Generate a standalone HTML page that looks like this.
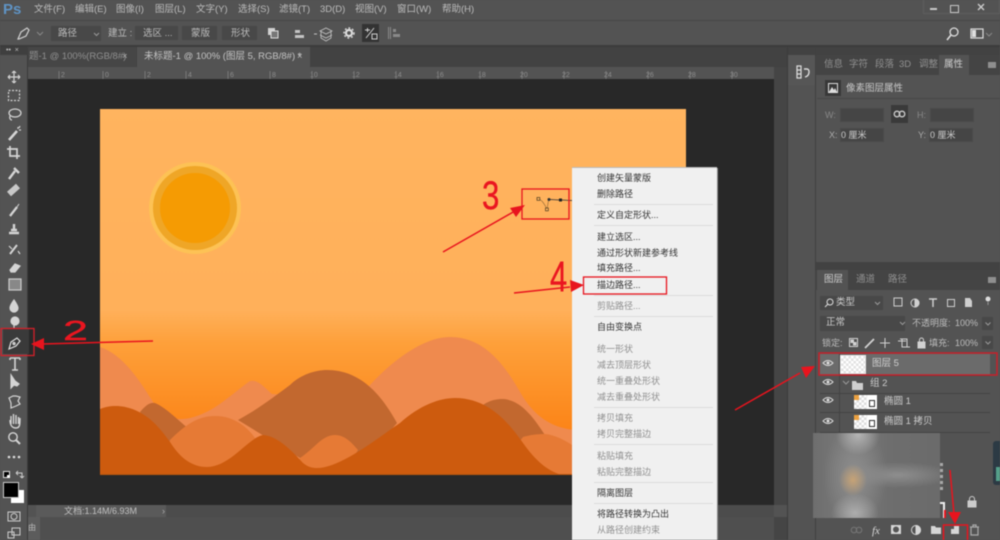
<!DOCTYPE html>
<html><head><meta charset="utf-8">
<style>
html,body{margin:0;padding:0;background:#535353}
#r{position:relative;width:1000px;height:540px;overflow:hidden;background:#535353;font-family:"Liberation Sans","Noto Sans CJK SC",sans-serif;font-size:9.5px;color:#bcbcbc;filter:blur(.55px)}
.a{position:absolute}
.t{position:absolute;white-space:nowrap;line-height:12px}
.m{position:absolute;left:597px;white-space:nowrap;font-size:9px;line-height:12px;color:#333}
.d{color:#8f8f8f}
.s{position:absolute;left:594px;width:119px;height:1px;background:#dcdcdc}
.b{position:absolute;background:#454545;border:1px solid #4a4a4a;box-sizing:border-box}
.n{position:absolute;white-space:nowrap;color:#ea1620;transform-origin:0 0;-webkit-text-stroke:.4px #ea1620}
svg{position:absolute;overflow:visible}
</style></head><body><div id="r">

<!-- top bars -->
<div class="a" style="left:0;top:20px;width:1000px;height:1px;background:#474747"></div>
<div class="a" style="left:0;top:45px;width:1000px;height:2px;background:#3c3c3c"></div>
<div class="t" style="left:3px;top:2px;font-size:15px;line-height:16px;font-weight:bold;color:#5f93c4">Ps</div>
<div class="t" style="left:34px;top:4px">文件(F)</div>
<div class="t" style="left:75px;top:4px">编辑(E)</div>
<div class="t" style="left:116px;top:4px">图像(I)</div>
<div class="t" style="left:155px;top:4px">图层(L)</div>
<div class="t" style="left:196px;top:4px">文字(Y)</div>
<div class="t" style="left:238px;top:4px">选择(S)</div>
<div class="t" style="left:279px;top:4px">滤镜(T)</div>
<div class="t" style="left:320px;top:4px">3D(D)</div>
<div class="t" style="left:355px;top:4px">视图(V)</div>
<div class="t" style="left:397px;top:4px">窗口(W)</div>
<div class="t" style="left:442px;top:4px">帮助(H)</div>
<!-- window buttons -->
<div class="a" style="left:923px;top:0;width:77px;height:14px;border:1px solid #5e5e5e;border-top:0;box-sizing:border-box"></div>
<div class="a" style="left:930px;top:8px;width:7px;height:2px;background:#c8c8c8"></div>
<div class="a" style="left:950px;top:5px;width:7px;height:6px;border:1px solid #c8c8c8"></div>
<svg style="left:977px;top:3px" width="9" height="9"><path d="M1 1L7 7M7 1L1 7" stroke="#ccc" stroke-width="1.4"/></svg>

<!-- options bar -->
<svg style="left:16px;top:26px" width="40" height="16"><path d="M2 13L5 6L11 2L13 4L10 10L3 13Z" fill="none" stroke="#d0d0d0" stroke-width="1.2"/><path d="M21 6L24 9L27 6" fill="none" stroke="#888" stroke-width="1"/></svg>
<div class="a" style="left:51px;top:26px;width:50px;height:15px;background:#484848"></div>
<div class="t" style="left:58px;top:28px">路径</div>
<svg style="left:93px;top:32px" width="8" height="5"><path d="M1 1L3.500 3.500L6 1" fill="none" stroke="#999"/></svg>
<div class="t" style="left:108px;top:28px">建立 :</div>
<div class="a" style="left:135px;top:26px;width:43px;height:14px;background:#484848"></div><div class="t" style="left:143px;top:28px">选区 ...</div>
<div class="a" style="left:182px;top:26px;width:35px;height:14px;background:#484848"></div><div class="t" style="left:191px;top:28px">蒙版</div>
<div class="a" style="left:222px;top:26px;width:35px;height:14px;background:#484848"></div><div class="t" style="left:231px;top:28px">形状</div>
<svg style="left:266px;top:26px" width="130" height="16" fill="none" stroke="#c4c4c4">
<rect x="2" y="2" width="7" height="7" fill="#d0d0d0" stroke="none"/><rect x="5" y="5" width="7" height="7" fill="#777" stroke="#dcdcdc"/>
<path d="M27 3V13M29 4H34V7H29ZM29 9H38V12H29Z" fill="#c4c4c4" stroke="none"/>
<path d="M48 8H51" /><path d="M54 5L60 2L66 5L60 8ZM54 9L60 12L66 9M55 5V12L60 15L65 12V5" stroke-width=".8"/>
</svg>
<svg style="left:343px;top:26px" width="14" height="14"><circle cx="6" cy="7" r="3" fill="none" stroke="#ddd" stroke-width="2.200"/><circle cx="6" cy="7" r="5" fill="none" stroke="#ddd" stroke-width="1.400" stroke-dasharray="1.800 2"/></svg>
<div class="a" style="left:362px;top:24px;width:17px;height:18px;background:#333"></div>
<svg style="left:364px;top:27px" width="14" height="13" fill="none" stroke="#d0d0d0"><path d="M1 3H6M3.500 1V5M2 11L10 1"/><rect x="8" y="7" width="5" height="5"/></svg>
<svg style="left:387px;top:26px" width="14" height="14" fill="#8a8a8a"><rect x="1" y="1" width="1" height="12"/><rect x="3" y="1" width="1" height="12"/><rect x="6" y="3" width="3" height="3"/><rect x="6" y="8" width="7" height="3"/></svg>
<!-- right of options -->
<svg style="left:945px;top:26px" width="50" height="16" fill="none" stroke="#ddd"><circle cx="9" cy="6" r="4" stroke-width="1.300"/><path d="M6 9L2 14" stroke-width="1.600"/><rect x="26" y="3" width="12" height="9" stroke-width="1.200"/><rect x="27" y="4" width="4" height="7" fill="#ddd" stroke="none"/><path d="M41 7L44 10L47 7" stroke="#888"/></svg>

<!-- tab row -->
<div class="a" style="left:28px;top:47px;width:759px;height:20px;background:#424242"></div>
<div class="a" style="left:28px;top:47px;width:108px;height:20px;background:#464646"></div>
<div class="t" style="left:29px;top:51px;color:#8f8f8f">题-1 @ 100%(RGB/8#)</div>
<div class="t" style="left:122px;top:51px;color:#aaa">×</div>
<div class="a" style="left:137px;top:47px;width:173px;height:20px;background:#535353"></div>
<div class="t" style="left:144px;top:51px;color:#c4c4c4">未标题-1 @ 100% (图层 5, RGB/8#) *</div>
<div class="t" style="left:297px;top:51px;color:#bbb">×</div>

<!-- ruler -->
<div class="a" style="left:28px;top:67px;width:746px;height:12px;background:#535353"></div>
<svg style="left:28px;top:67px;font-size:7px;font-family:'Liberation Sans',sans-serif" width="746" height="12" fill="#8e8e8e">
<text x="33" y="10">2</text><text x="77" y="10">0</text><text x="119" y="10">2</text><text x="160" y="10">4</text><text x="202" y="10">6</text><text x="244" y="10">8</text><text x="282" y="10">10</text><text x="324" y="10">12</text><text x="366" y="10">14</text><text x="408" y="10">16</text><text x="450" y="10">18</text><text x="492" y="10">20</text><text x="534" y="10">22</text><text x="576" y="10">24</text><text x="618" y="10">26</text><text x="660" y="10">28</text><text x="702" y="10">30</text>
<path d="M31 4V12M75 4V12M117 4V12M158 4V12M200 4V12M242 4V12M284 4V12M326 4V12M368 4V12M410 4V12M452 4V12M494 4V12M536 4V12M578 4V12M620 4V12M662 4V12M704 4V12" stroke="#777"/>
</svg>
<div class="a" style="left:28px;top:79px;width:746px;height:1px;background:#1e1e1e"></div>

<!-- canvas background -->
<div class="a" style="left:28px;top:79px;width:746px;height:426px;background:#282828"></div>
<!-- artboard -->
<svg style="left:0;top:0" width="1000" height="540">
<defs><linearGradient id="g" x1="0" y1="109" x2="0" y2="475" gradientUnits="userSpaceOnUse">
<stop offset="0" stop-color="#ffb45f"/><stop offset=".55" stop-color="#ffb05a"/><stop offset=".64" stop-color="#fea03a"/><stop offset=".88" stop-color="#fc8417"/><stop offset="1" stop-color="#fc8417"/></linearGradient>
<clipPath id="c"><rect x="100" y="109" width="586" height="366"/></clipPath></defs>
<rect x="100" y="109" width="586" height="366" fill="url(#g)"/>
<circle cx="195" cy="208" r="46" fill="#fdc255"/>
<circle cx="195" cy="208" r="42" fill="#efa627"/>
<circle cx="195" cy="208" r="35" fill="#f59b03"/>
<g clip-path="url(#c)">
<path d="M100 347C125 355 142 385 155 405C165 418 175 421 190 418C215 412 230 395 250 381C258 379 265 388 272 394C300 395 345 410 370 385C395 358 425 337 450 337C490 337 510 375 523 397C538 420 555 428 575 430L690 430V480H100Z" fill="#ef8a4e"/>
<path d="M140 412C146 405 150 402 155 403C165 407 178 420 190 430L165 450ZM238 420C260 408 275 396 290 385C300 375 315 370 327 370C365 370 385 402 397 423L372 452L300 458ZM483 405C490 400 497 399 503 399C522 400 535 420 545 435L525 445Z" fill="#c2682f"/>
<path d="M170 440C185 425 198 416 215 416C235 416 248 428 255 438L265 480L160 480ZM300 458C315 448 322 435 335 435C345 435 352 443 358 450L340 480L290 480ZM523 437C530 435 537 434 545 434C555 435 565 440 575 447V480H490Z" fill="#e67a35"/>
<path d="M100 409C108 406 112 406 118 406C145 408 160 428 170 442C180 458 192 467 207 467C230 467 248 438 263 435C278 436 293 452 303 463C308 467 312 468 317 468C340 468 375 440 400 423C420 405 440 398 455 398C490 398 510 425 523 443C535 460 548 472 563 475H100Z" fill="#cd5b0e"/>
</g>
<rect x="100" y="474" width="586" height="1" fill="#b8560f"/>
<!-- anchors -->
<path d="M538 199C543 200 545 206 547 209C548 205 548 201 549 199.500L572 200.500" fill="none" stroke="#8a6230" stroke-width=".6"/>
<path d="M549 199.500L572 200.500" fill="none" stroke="#333" stroke-width=".7"/>
<rect x="537" y="197.500" width="2.800" height="2.800" fill="#ffb45f" stroke="#4a3a20" stroke-width=".7"/>
<rect x="545.500" y="208" width="2.800" height="2.800" fill="#ffb45f" stroke="#4a3a20" stroke-width=".7"/>
<circle cx="549" cy="199.500" r="1.500" fill="#333"/><rect x="559" y="198.500" width="3" height="3" fill="#222"/>
</svg>

<!-- status bar -->
<div class="a" style="left:28px;top:505px;width:8px;height:12px;background:#535353"></div>
<div class="a" style="left:36px;top:505px;width:130px;height:12px;background:#5a5a5a"></div>
<div class="a" style="left:166px;top:505px;width:608px;height:12px;background:#4c4c4c"></div>
<div class="t" style="left:64px;top:505px;color:#c0c0c0;font-size:9px">文档:1.14M/6.93M</div>
<div class="t" style="left:162px;top:505px;color:#aaa;font-size:9px">&#8250;</div>
<div class="a" style="left:28px;top:517px;width:12px;height:23px;background:#5c5c5c"></div>
<div class="a" style="left:40px;top:517px;width:747px;height:23px;background:#4f4f4f"></div>
<div class="t" style="left:28px;top:522px;color:#bbb;font-size:8px">由</div>

<!-- toolbar -->
<div class="a" style="left:0;top:47px;width:28px;height:493px;background:#535353;border-right:1px solid #3a3a3a;box-sizing:border-box"></div>
<div class="a" style="left:0;top:47px;width:28px;height:8px;background:#3f3f3f"></div>
<div class="t" style="left:6px;top:46px;font-size:7px;line-height:9px;color:#bbb">&#8226;&#8226;&nbsp;&nbsp;×</div>
<svg style="left:0;top:0" width="28" height="540" fill="none" stroke="#d4d4d4" stroke-width="1.200">
<path d="M14 71V83M8 77H20M14 71L12 73M14 71L16 73M14 83L12 81M14 83L16 81M8 77L10 75M8 77L10 79M20 77L18 75M20 77L18 79"/>
<rect x="8.500" y="90.500" width="11" height="10" stroke-dasharray="2 1.500"/>
<ellipse cx="15" cy="113" rx="6" ry="4"/><path d="M10 116C9 119 11 120 12 120"/>
<path d="M9 140L17 131" stroke-width="2.600"/><path d="M18 127V129M21 130H19M20 126L19 128"/>
<path d="M10 146V156H20M7 149H17V159" stroke-width="1.700"/>
<path d="M9 179L15 171M14 168L19 173" stroke-width="2.400"/>
<path d="M9 194L18 186" stroke-width="6" stroke="#c8c8c8"/>
<path d="M10 216L17 207" stroke-width="2.300"/><path d="M17 207L19 204" stroke-width="1"/>
<path d="M11 230H17M14 224V230M9 233H19" stroke-width="2.400"/>
<path d="M10 254L17 245" stroke-width="2"/><path d="M9 246L12 249M18 251L20 254"/>
<path d="M10 270L15 264L20 266L15 272H11Z" fill="#d4d4d4"/>
<rect x="9" y="279" width="12" height="11" fill="#888" stroke="#ccc"/>
<path d="M14 300C11 304 10 306 10 308A4 4 0 0 0 18 308C18 306 16 303 14 300Z" fill="#d4d4d4"/>
<circle cx="15" cy="321" r="4" fill="#d4d4d4"/><path d="M14 325V329"/>
<path d="M10 358H20M15 358V370M12 370H18M10 358V360M20 358V360" stroke-width="1.600"/>
<path d="M11 375V388L14 385L17 386L19 384L15 381Z" fill="#d4d4d4"/>
<path d="M9 398L13 396L16 396L20 397L18 401L20 404L16 406L11 408L11 403Z"/>
<path d="M11 424V416M13.500 424V414M16 424V415M18.500 424V417M10 420C10 426 13 428 16 428C20 428 20 424 20 418" stroke-width="1.400"/>
<circle cx="13" cy="437" r="4.200" stroke-width="1.400"/><path d="M16 440L20 444" stroke-width="2"/>
</svg>
<svg style="left:0;top:0" width="28" height="540" fill="#ddd"><circle cx="9" cy="457" r="1.300"/><circle cx="14" cy="457" r="1.300"/><circle cx="19" cy="457" r="1.300"/></svg>
<div class="a" style="left:3px;top:329px;width:26px;height:25px;background:#3a3a3a"></div>
<svg style="left:7px;top:336px" width="14" height="14" fill="none" stroke="#e2e2e2" stroke-width="1.200"><path d="M2 13L4 6L10 2L13 5L9 10Z"/><circle cx="7" cy="7.500" r="1"/></svg>
<!-- swatches -->
<div class="a" style="left:3px;top:471px;width:5px;height:5px;background:#000;border:1px solid #ddd"></div>
<div class="a" style="left:7px;top:475px;width:3px;height:3px;background:#fff"></div>
<svg style="left:15px;top:470px" width="10" height="9" fill="none" stroke="#ccc"><path d="M1 3H7V8M1 3L3 1M1 3L3 5M7 8L5 6M7 8L9 6"/></svg>
<div class="a" style="left:11px;top:490px;width:13px;height:13px;background:#fff"></div>
<div class="a" style="left:3px;top:482px;width:14px;height:14px;background:#000;border:1px solid #ccc"></div>
<svg style="left:7px;top:511px" width="14" height="28" fill="none" stroke="#ccc"><rect x="1" y="1" width="12" height="9"/><circle cx="7" cy="5.500" r="3"/><rect x="5" y="17" width="8" height="7"/><rect x="1" y="21" width="6" height="6"/></svg>

<!-- dock -->
<div class="a" style="left:774px;top:67px;width:13px;height:473px;background:#454545"></div>
<div class="a" style="left:774px;top:505px;width:13px;height:12px;background:#535353"></div>
<div class="a" style="left:787px;top:47px;width:1px;height:493px;background:#3c3c3c"></div>
<div class="a" style="left:788px;top:55px;width:27px;height:30px;background:#565656"></div>
<div class="a" style="left:788px;top:47px;width:27px;height:8px;background:#424242"></div>
<div class="a" style="left:815px;top:47px;width:185px;height:8px;background:#424242"></div>
<svg style="left:796px;top:65px" width="16" height="15" fill="none" stroke="#ddd"><path d="M1 1H5V13H1ZM1 5H5M1 9H5" stroke-width="1.200"/><path d="M8 4H11C14 4 14 11 9 12" stroke-width="1.400"/></svg>

<!-- properties panel -->
<div class="a" style="left:815px;top:55px;width:185px;height:20px;background:#444"></div>
<div class="a" style="left:939px;top:55px;width:30px;height:20px;background:#535353"></div>
<div class="t" style="left:824px;top:59px;color:#909090">信息</div>
<div class="t" style="left:849px;top:59px;color:#909090">字符</div>
<div class="t" style="left:875px;top:59px;color:#909090">段落</div>
<div class="t" style="left:899px;top:59px;color:#909090">3D</div>
<div class="t" style="left:919px;top:59px;color:#909090">调整</div>
<div class="t" style="left:944px;top:59px;color:#cfcfcf">属性</div>
<div class="a" style="left:988px;top:62px;width:8px;height:6px;background:#8f8f8f"></div>
<div class="a" style="left:825px;top:80px;width:16px;height:16px;background:#383838"></div>
<svg style="left:828px;top:83px" width="10" height="10"><rect x=".5" y=".5" width="9" height="9" fill="none" stroke="#ddd"/><path d="M1 9L4 4L6 7L7 5L9 9Z" fill="#ddd"/></svg>
<div class="t" style="left:846px;top:83px;color:#c8c8c8">像素图层属性</div>
<div class="a" style="left:817px;top:98px;width:183px;height:1px;background:#474747"></div>
<div class="t" style="left:825px;top:109px;color:#888;font-size:9px">W:</div>
<div class="b" style="left:840px;top:108px;width:44px;height:14px"></div>
<div class="a" style="left:891px;top:105px;width:17px;height:18px;background:#3a3a3a"></div>
<svg style="left:893px;top:110px" width="13" height="8" fill="none" stroke="#ccc" stroke-width="1.300"><circle cx="4" cy="4" r="2.800"/><circle cx="9" cy="4" r="2.800"/></svg>
<div class="t" style="left:917px;top:109px;color:#888;font-size:9px">H:</div>
<div class="b" style="left:930px;top:108px;width:44px;height:14px"></div>
<div class="t" style="left:829px;top:129px;color:#aaa;font-size:9px">X:</div>
<div class="b" style="left:840px;top:128px;width:44px;height:14px"></div>
<div class="t" style="left:841px;top:129px;color:#ccc;font-size:9px">0 厘米</div>
<div class="t" style="left:918px;top:129px;color:#aaa;font-size:9px">Y:</div>
<div class="b" style="left:929px;top:128px;width:44px;height:14px"></div>
<div class="t" style="left:930px;top:129px;color:#ccc;font-size:9px">0 厘米</div>
<div class="a" style="left:815px;top:262px;width:185px;height:8px;background:#424242"></div>
<div class="a" style="left:815px;top:47px;width:1px;height:493px;background:#404040"></div>

<!-- layers panel -->
<div class="a" style="left:815px;top:270px;width:185px;height:20px;background:#444"></div>
<div class="a" style="left:817px;top:270px;width:31px;height:20px;background:#535353"></div>
<div class="t" style="left:824px;top:274px;color:#cfcfcf">图层</div>
<div class="t" style="left:856px;top:274px;color:#909090">通道</div>
<div class="t" style="left:888px;top:274px;color:#909090">路径</div>
<div class="a" style="left:988px;top:277px;width:8px;height:6px;background:#8f8f8f"></div>
<div class="a" style="left:820px;top:296px;width:63px;height:14px;background:#484848"></div>
<svg style="left:824px;top:298px" width="10" height="10" fill="none" stroke="#ddd"><circle cx="6" cy="4" r="3"/><path d="M4 6L1 9"/></svg>
<div class="t" style="left:836px;top:297px;color:#ccc">类型</div>
<svg style="left:874px;top:301px" width="8" height="5"><path d="M1 1L3.500 3.500L6 1" fill="none" stroke="#999"/></svg>
<svg style="left:893px;top:296px" width="100" height="14" fill="none" stroke="#cfcfcf"><rect x="1" y="2" width="8" height="8"/><circle cx="22" cy="7" r="4"/><path d="M22 3A4 4 0 0 1 22 11Z" fill="#cfcfcf"/><path d="M36 3H44M40 3V11" stroke-width="1.500"/><rect x="54.500" y="3.500" width="7" height="7"/><path d="M72 2H77L79 5V11H72Z" fill="#cfcfcf" stroke="none"/><circle cx="95" cy="3" r="2.500" fill="#ddd" stroke="none"/><path d="M95 6V9" stroke="#999"/></svg>
<div class="a" style="left:820px;top:316px;width:85px;height:15px;background:#484848"></div>
<div class="t" style="left:826px;top:317px;color:#ccc">正常</div>
<svg style="left:899px;top:321px" width="8" height="5"><path d="M1 1L3.500 3.500L6 1" fill="none" stroke="#999"/></svg>
<div class="t" style="left:912px;top:317px;font-size:9px">不透明度:</div>
<div class="t" style="left:955px;top:317px;font-size:9px">100%</div>
<div class="a" style="left:982px;top:317px;width:11px;height:13px;background:#484848"></div>
<svg style="left:985px;top:322px" width="7" height="4"><path d="M.5 .5L3 3L5.500 .5" fill="none" stroke="#999"/></svg>
<div class="t" style="left:822px;top:337px;font-size:9px">锁定:</div>
<svg style="left:848px;top:336px" width="96" height="14" fill="none" stroke="#d2d2d2"><rect x="1.500" y="2.500" width="8" height="8"/><rect x="3" y="4" width="2.500" height="2.500" fill="#d2d2d2"/><rect x="5.500" y="6.500" width="2.500" height="2.500" fill="#d2d2d2"/><path d="M17 12L26 3" stroke-width="1.800"/><path d="M37 2V12M32 7H42"/><path d="M52 3H59V11M50 5H58M54 3V11H62"/><rect x="70" y="6" width="7" height="6" fill="#d2d2d2"/><path d="M71.500 6V4A2 2 0 0 1 75.500 4V6"/></svg>
<div class="t" style="left:929px;top:337px;font-size:9px">填充:</div>
<div class="t" style="left:955px;top:337px;font-size:9px">100%</div>
<div class="a" style="left:982px;top:336px;width:11px;height:13px;background:#484848"></div>
<svg style="left:985px;top:341px" width="7" height="4"><path d="M.5 .5L3 3L5.500 .5" fill="none" stroke="#999"/></svg>
<!-- layers -->
<div class="a" style="left:820px;top:354px;width:170px;height:21px;background:#6b6b6b"></div>
<div class="a" style="left:840px;top:375px;width:150px;height:1px;background:#3e3e3e"></div>
<div class="a" style="left:820px;top:393px;width:170px;height:1px;background:#434343"></div>
<div class="a" style="left:820px;top:412px;width:170px;height:1px;background:#434343"></div>
<div class="a" style="left:820px;top:432px;width:170px;height:1px;background:#434343"></div>
<div class="a" style="left:839px;top:354px;width:1px;height:120px;background:#434343"></div>
<svg style="left:822px;top:355px" width="12" height="80">
<g fill="none" stroke="#ddd" stroke-width="1"><path d="M1 8Q6 3 11 8Q6 13 1 8Z"/><path d="M1 27Q6 22 11 27Q6 32 1 27Z"/><path d="M1 45Q6 40 11 45Q6 50 1 45Z"/><path d="M1 66Q6 61 11 66Q6 71 1 66Z"/></g>
<g fill="#ddd"><circle cx="6" cy="8" r="1.500"/><circle cx="6" cy="27" r="1.500"/><circle cx="6" cy="45" r="1.500"/><circle cx="6" cy="66" r="1.500"/></g></svg>
<div class="a" style="left:841px;top:356px;width:24px;height:17px;background:repeating-conic-gradient(#e2e2e2 0 25%,#fff 0 50%) 0 0/5px 5px;outline:1px solid #e8e8e8"></div>
<div class="t" style="left:872px;top:358px;color:#d0d0d0">图层 5</div>
<svg style="left:841px;top:378px" width="22" height="14"><path d="M2 3L5 6L8 3" fill="none" stroke="#999"/><path d="M11 3H15L16 5H22V12H11Z" fill="#cfcfcf"/></svg>
<div class="t" style="left:870px;top:378px;color:#ccc">组 2</div>
<div class="a" style="left:854px;top:395px;width:13px;height:14px;background:repeating-conic-gradient(#ddd 0 25%,#fff 0 50%) 0 0/5px 5px"></div>
<div class="a" style="left:854px;top:395px;width:5px;height:5px;background:#eaa040"></div>
<div class="a" style="left:867px;top:395px;width:10px;height:14px;background:#fff"></div>
<div class="a" style="left:869px;top:400px;width:6px;height:7px;border:1px solid #333;box-sizing:border-box"></div>
<div class="t" style="left:884px;top:396px;color:#ccc">椭圆 1</div>
<div class="a" style="left:854px;top:415px;width:13px;height:14px;background:repeating-conic-gradient(#ddd 0 25%,#fff 0 50%) 0 0/5px 5px"></div>
<div class="a" style="left:854px;top:415px;width:5px;height:5px;background:#eaa040"></div>
<div class="a" style="left:867px;top:415px;width:10px;height:14px;background:#fff"></div>
<div class="a" style="left:869px;top:420px;width:6px;height:7px;border:1px solid #333;box-sizing:border-box"></div>
<div class="t" style="left:884px;top:416px;color:#ccc">椭圆 1 拷贝</div>
<!-- right side of hidden layers -->
<svg style="left:966px;top:495px" width="12" height="14" fill="none" stroke="#ccc"><rect x="2" y="6" width="8" height="6" fill="#ccc"/><path d="M3.500 6V4A2.500 2.500 0 0 1 8.500 4V6"/></svg>
<div class="a" style="left:940px;top:463px;width:3px;height:27px;background:repeating-linear-gradient(#a8a8a8 0 3px,#5a5a5a 3px 6px)"></div>
<div class="a" style="left:940px;top:502px;width:5px;height:2px;background:#eee"></div>
<div class="a" style="left:943px;top:502px;width:2px;height:16px;background:#eee"></div>
<div class="a" style="left:993px;top:441px;width:7px;height:44px;background:#2c3a44;border-radius:3px 0 0 3px"></div>
<div class="a" style="left:996px;top:467px;width:4px;height:14px;background:#55a08a"></div>
<!-- blurred patch -->
<div class="a" style="left:813px;top:433px;width:127px;height:85px;background:
radial-gradient(ellipse 14px 16px at 40px 47px,rgba(205,165,115,.9),rgba(205,165,115,0) 100%),
radial-gradient(ellipse 22px 20px at 45px 2px,#b4b4b4,rgba(180,180,180,0) 100%),
radial-gradient(ellipse 24px 20px at 42px 80px,#adadad,rgba(173,173,173,0) 100%),
radial-gradient(ellipse 55px 13px at 85px 42px,#8e8e8e,rgba(142,142,142,0) 100%),
radial-gradient(ellipse 32px 50px at 42px 42px,#8e8e8e,rgba(142,142,142,0) 100%),
linear-gradient(90deg,#6e6e6e,#7a7a7a 30%,#6e6e6e 60%,#6b6b6b)"></div>
<!-- bottom icons -->
<svg style="left:850px;top:522px" width="135" height="16" fill="none" stroke="#d6d6d6">
<circle cx="4" cy="8" r="2.800" stroke="#777"/><circle cx="9" cy="8" r="2.800" stroke="#777"/>
<rect x="41" y="3" width="10" height="9" fill="#d6d6d6" stroke="none"/><circle cx="46" cy="7.500" r="3" fill="#555" stroke="none"/>
<circle cx="66" cy="8" r="4.500"/><path d="M66 3.500A4.500 4.500 0 0 1 66 12.500Z" fill="#d6d6d6"/>
<path d="M81 4H85L86 5.500H91V12H81Z" fill="#d6d6d6" stroke="none"/>
<rect x="101" y="4" width="8" height="8" fill="#d6d6d6" stroke="none"/><path d="M101 4H104V7H101Z" fill="#555" stroke="none"/>
<path d="M120 5H129M121 5V13H128V5M123 5V3H126V5" stroke="#aaa" stroke-width="1.200"/>
</svg>
<div class="t" style="left:872px;top:525px;font-family:'Liberation Serif',serif;font-style:italic;font-size:11px;color:#d8d8d8">fx</div>

<!-- context menu -->
<div class="a" style="left:572px;top:168px;width:145px;height:372px;background:#f0f0f0;box-shadow:1px 0 0 #8a8a8a,0 -1px 0 #bbb"></div>
<div class="m" style="top:172px">创建矢量蒙版</div>
<div class="m" style="top:188px">删除路径</div>
<div class="s" style="top:204px"></div>
<div class="m" style="top:209px">定义自定形状...</div>
<div class="s" style="top:225px"></div>
<div class="m" style="top:231px">建立选区...</div>
<div class="m" style="top:247px">通过形状新建参考线</div>
<div class="m" style="top:262px">填充路径...</div>
<div class="m" style="top:279px">描边路径...</div>
<div class="s" style="top:295px"></div>
<div class="m d" style="top:300px">剪贴路径...</div>
<div class="s" style="top:316px"></div>
<div class="m" style="top:321px">自由变换点</div>
<div class="m d" style="top:343px">统一形状</div>
<div class="m d" style="top:359px">减去顶层形状</div>
<div class="m d" style="top:375px">统一重叠处形状</div>
<div class="m d" style="top:391px">减去重叠处形状</div>
<div class="s" style="top:407px"></div>
<div class="m d" style="top:412px">拷贝填充</div>
<div class="m d" style="top:428px">拷贝完整描边</div>
<div class="s" style="top:444px"></div>
<div class="m d" style="top:450px">粘贴填充</div>
<div class="m d" style="top:466px">粘贴完整描边</div>
<div class="s" style="top:482px"></div>
<div class="m" style="top:487px">隔离图层</div>
<div class="s" style="top:503px"></div>
<div class="m" style="top:508px">将路径转换为凸出</div>
<div class="m d" style="top:524px">从路径创建约束</div>

<!-- annotations -->
<svg style="left:0;top:0" width="1000" height="540" fill="none" stroke="#e8141e">
<rect x="522" y="189" width="47" height="30" stroke-width="1.300"/>
<rect x="583.500" y="277" width="83" height="17" stroke-width="1.300"/>
<rect x="1" y="328.500" width="33" height="27" stroke-width="1.300" stroke="#d5202a"/>
<rect x="819" y="353" width="178" height="22" stroke-width="1.500" stroke="#c8202a"/>
<rect x="943.500" y="525" width="24" height="16" stroke-width="1.500"/>
<path d="M443 252L515 211" stroke-width="1.500"/><path d="M525 205L510 208L516 217Z" fill="#e8141e" stroke="none"/>
<path d="M514 293L570 287" stroke-width="1.500"/><path d="M584 285L570 280L571 292Z" fill="#e8141e" stroke="none"/>
<path d="M153 341L42 344" stroke-width="1.500"/><path d="M31 344L44 338L44 350Z" fill="#e8141e" stroke="none"/>
<path d="M735 410L800 373" stroke-width="1.500"/><path d="M815 366L801 367L806 378Z" fill="#e8141e" stroke="none"/>
<path d="M950 470L954 514" stroke-width="1.500"/><path d="M948 512H961L955 524Z" fill="#e8141e" stroke="none"/>
<path d="M945 510V518" stroke-width="2"/>
</svg>
<div class="n" style="left:482px;top:176px;font-size:40px;line-height:40px;transform:scaleX(.78)">3</div>
<div class="n" style="left:550px;top:256px;font-size:43px;line-height:43px;transform:scaleX(.72)">4</div>
<div class="n" style="left:63px;top:317px;font-size:28px;line-height:28px;transform:scaleX(1.600)">2</div>
</div></body></html>
